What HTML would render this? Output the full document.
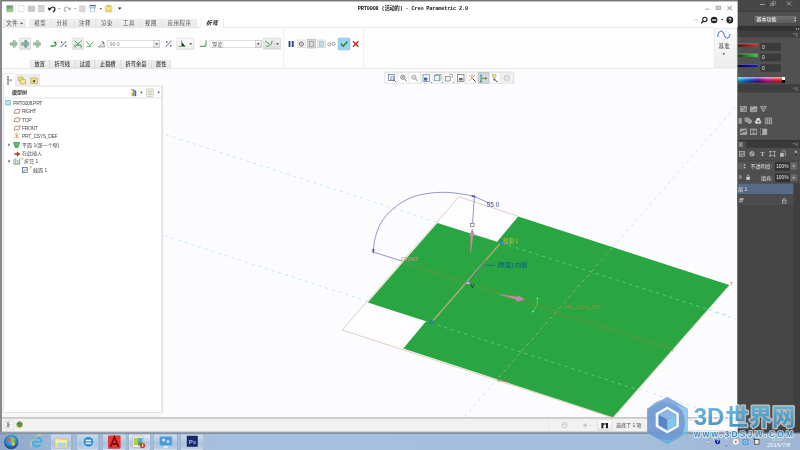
<!DOCTYPE html>
<html lang="zh"><head><meta charset="utf-8"><title>PRT0008 - Creo Parametric 2.0</title>
<style>
html,body{margin:0;padding:0;width:800px;height:450px;overflow:hidden;background:#fcfcfe}
#root{position:absolute;left:0;top:0;width:1920px;height:1080px;transform:scale(0.4166667);transform-origin:0 0;overflow:hidden;
 font-family:"Liberation Sans","Noto Sans CJK SC",sans-serif;font-size:12px;color:#333;background:#fcfcfe;filter:blur(0.7px)}
#root div,#root span.t,#root span.w{position:absolute;box-sizing:border-box}
#root span.t{white-space:nowrap;transform:translateY(-50%);line-height:1}
#root span.w{white-space:nowrap;transform:translateY(-50%);line-height:1;color:#e6e6e6}
#root svg{position:absolute;left:0;top:0;overflow:visible}
</style></head><body>
<div id="root">
<div style="left:1770.24px;top:0px;width:149.76px;height:1039.2px;background:#494949"></div>
<div style="left:1770.24px;top:0px;width:149.76px;height:26.4px;background:#474747"></div>
<div style="left:1770.24px;top:26.4px;width:149.76px;height:1.44px;background:#2e2e2e"></div>
<div style="left:1770.24px;top:27.84px;width:149.76px;height:34.56px;background:#4f4f4f"></div>
<div style="left:1770.24px;top:62.4px;width:149.76px;height:12px;background:#333"></div>
<div style="left:1770.24px;top:74.4px;width:149.76px;height:15.84px;background:#3f3f3f"></div>
<div style="left:1770.24px;top:90.24px;width:149.76px;height:112.8px;background:#515151"></div>
<div style="left:1770.24px;top:203.04px;width:149.76px;height:1.92px;background:#333"></div>
<div style="left:1770.24px;top:204.96px;width:149.76px;height:17.28px;background:#3f3f3f"></div>
<div style="left:1770.24px;top:222.24px;width:149.76px;height:113.76px;background:#515151"></div>
<div style="left:1770.24px;top:336px;width:149.76px;height:2.4px;background:#2e2e2e"></div>
<div style="left:1770.24px;top:338.4px;width:149.76px;height:16.32px;background:#3a3a3a"></div>
<div style="left:1770.24px;top:354.72px;width:149.76px;height:139.68px;background:#4e4e4e"></div>
<div style="left:1770.24px;top:494.4px;width:149.76px;height:544.8px;background:#464646"></div>
<div style="left:1904.16px;top:439.2px;width:15.84px;height:600px;background:#3f3f3f"></div>
<div style="left:0px;top:0px;width:1770.24px;height:4.08px;background:#777"></div>
<div style="left:0px;top:0px;width:4.8px;height:1036.8px;background:#8a8a8a"></div>
<div style="left:4.8px;top:4.08px;width:1765.44px;height:61.44px;background:#fff"></div>
<div style="left:4.8px;top:65.52px;width:1707.84px;height:99.12px;background:#fdfdfd;border-top:1px solid #c9c9c9;border-bottom:1px solid #c9c9c9"></div>
<div style="left:4.8px;top:990.72px;width:386.4px;height:11.52px;background:#f8f8f8"></div>
<div style="left:4.8px;top:1001.76px;width:1765.44px;height:36px;background:#f1f1f1;border-top:2px solid #9a9a9a"></div>
<svg width="1920" height="1080" viewBox="0 0 800 450">
<g fill="none" stroke-linecap="butt">
<!-- datum dashed lines -->
<path d="M166 134.8 L738 319.6" stroke="#98dfd8" stroke-width="0.6" stroke-dasharray="3.2 3.83"/>
<path d="M164.5 235.7 L738 421" stroke="#98dfd8" stroke-width="0.6" stroke-dasharray="3.2 3.83"/>
<path d="M735 107.5 L461 420.5" stroke="#98dfd8" stroke-width="0.6" stroke-dasharray="3.2 3.83"/>
</g>
<!-- unbent outline -->
<polygon points="459,196.8 518.6,216.4 518.2,217.6 729,285.8 613,417.8 342.1,330" fill="#fdfdff" stroke="#c9a98a" stroke-width="0.55"/>
<!-- sheet -->
<polygon points="437.4,222.9 497.1,241.7 518.2,216.4 729.2,285.1 612.9,417.2 403.3,348.4 426,321.3 367.8,302.4" fill="#29a641"/>
<g fill="none">
<path d="M497.1 241.7 L729 316" stroke="#7fd9b8" stroke-width="0.6" stroke-dasharray="3.2 3.83" stroke-dashoffset="2"/>
<path d="M426 321.3 L640 390.5" stroke="#7fd9b8" stroke-width="0.6" stroke-dasharray="3.2 3.83" stroke-dashoffset="2"/>
<path d="M612 248 L496.4 380.2" stroke="#7a8f48" stroke-width="0.5"/><path d="M612 248 L496.4 380.2" stroke="#9fd39a" stroke-width="0.55" stroke-dasharray="3.2 3.83"/>
<!-- csys lines -->
<path d="M402 261 L672 348" stroke="#7a8f42" stroke-width="0.45"/>
<path d="M402 263.5 L672 350.5" stroke="#7a8f42" stroke-width="0.45"/>
<!-- bend line -->
<path d="M500.5 243 L431 323" stroke="#b9a878" stroke-width="1.3"/>
<path d="M486 260 L469 281" stroke="#4a5fa8" stroke-width="0.7"/>
<path d="M485.5 265.3 L495 265.3" stroke="#0b4f8c" stroke-width="0.6"/>
<!-- dimension arc -->
<path d="M373.3 251.6 C373.6 249.4 373.8 243.2 375.1 238.3 C376.4 233.4 378.2 227.3 381.3 222.3 C384.4 217.3 388.8 212.2 393.8 208.1 C398.9 203.9 405.4 199.9 411.6 197.4 C417.8 194.9 424.9 193.8 431.1 193 C437.3 192.2 443.0 192.2 448.9 192.5 C454.8 192.8 462.4 194.1 466.7 194.8 C471.0 195.5 473.2 196.3 474.5 196.6 L489 203" stroke="#3b3fa6" stroke-width="0.55"/>
<path d="M371.5 251.5 L402 261" stroke="#3b3fa6" stroke-width="0.55"/>
<path d="M474.5 194.5 L472.6 223" stroke="#3b3fa6" stroke-width="0.55"/>
<rect x="470.6" y="223.2" width="3.4" height="3.4" fill="#fff" stroke="#333" stroke-width="0.5"/>
</g>
<path d="M472.2 229 L474.6 235.6 L473 235.4 L470.6 252.6 L470.8 235.4 L469.6 235.6 Z" fill="#c98aa8" stroke="#c98aa8" stroke-width="0.5"/>
<path d="M500.4 294.6 L517.6 297.2 L517.6 295.4 L524.6 299.6 L516.4 301.2 L517 299.4 Z" fill="#c98aa8" stroke="#c98aa8" stroke-width="0.5"/>
<path d="M373.3 254 L372.3 249 L374.6 249 Z" fill="#3b3fa6"/>
<path d="M477 197.6 L471.5 196.8 L472 195 Z" fill="#3b3fa6"/>
<ellipse cx="502" cy="242.6" rx="2.6" ry="1.3" fill="#2ba6c8" stroke="#0b3f7c" stroke-width="0.5"/>
<ellipse cx="432" cy="322.2" rx="2.2" ry="1.2" fill="#2ba6c8" stroke="#0b3f7c" stroke-width="0.5"/>
<ellipse cx="468" cy="283" rx="2.2" ry="1.4" fill="#cfd6e6" stroke="#3b3f86" stroke-width="0.5"/>
<path d="M537.5 298.5 L537 305 L533 311.5" fill="none" stroke="#55e06a" stroke-width="0.6"/>
<circle cx="537.5" cy="298.5" r="0.9" fill="#4dff5a"/><circle cx="533" cy="311.5" r="1" fill="#3fffb0"/>
<g font-family="Liberation Sans, Noto Sans CJK SC, sans-serif">
<text x="486.8" y="207.4" font-size="6.4" fill="#3b3fa6">95.0</text>
<text x="503" y="243.4" font-size="5.4" fill="#d8b23a">截面 1</text>
<text x="497.4" y="267.4" font-size="6.2" fill="#0b4f9c">[厚度] 内侧</text>
<text x="470.6" y="287.8" font-size="6" font-weight="bold" fill="#0b3f7c">V</text>
<text x="401" y="260.6" font-size="5" fill="#c9a58a">FRONT</text>
<text x="564.6" y="309.4" font-size="4.7" fill="#7f9a3e">PRT_CSYS_DEF</text>
<text x="730" y="286" font-size="4.6" fill="#a88a6a">T</text><text x="671.6" y="352" font-size="4.2" fill="#8a8a4a">T</text><text x="497.6" y="381.8" font-size="4.4" fill="#8f7a48">RIGHT</text>
</g>
</svg>
<div style="left:8.4px;top:206.4px;width:381.6px;height:783.84px;background:#fff;border:1px solid #c4c4c4;border-right:2px solid #c4c4c4"></div>
<div style="left:14.88px;top:12px;width:17.28px;height:16.8px;background:linear-gradient(160deg,#4a7fa8,#6fae6a 40%,#a4d08a 75%,#7ab06a);border-radius:2px;border:1px solid #7a9a8a"></div>
<div style="left:36.48px;top:8.4px;width:0.96px;height:24px;background:#d8d8d8"></div>
<div style="left:45.12px;top:11.52px;width:12.48px;height:17.28px;background:#fff;border:1px solid #b8b8b8"></div>
<div style="left:67.2px;top:14.4px;width:16.8px;height:13.92px;background:#c9c9c9;border-radius:2px;border:1px solid #b0b0b0"></div>
<div style="left:91.68px;top:12px;width:13.92px;height:16.8px;background:#d5d5d5;border:1px solid #b5b5b5"></div>
<svg width="1920" height="1080" viewBox="0 0 800 450">
<path d="M50 9.2 C51 6.4 54.8 6.2 54.9 9 C55 10.4 54.2 11.4 52.8 11.8" fill="none" stroke="#222" stroke-width="1.2"/><path d="M47.8 7.4 L51.6 8.4 L49 11z" fill="#222"/>
<path d="M69.2 9.2 C68.2 6.4 64.4 6.2 64.3 9 C64.2 10.4 65 11.4 66.4 11.8" fill="none" stroke="#b0b0b0" stroke-width="1.1"/><path d="M71.4 7.4 L67.6 8.4 L70.2 11z" fill="#b0b0b0"/>
<path d="M58 8 h2.4 l-1.2 1.5z M73.8 8 h2.4 l-1.2 1.5z" fill="#999"/>
<path d="M99.6 8 h2.4 l-1.2 1.5z" fill="#444"/>
<path d="M118 7.6 h3.4 l-1.7 2.2z" fill="#222"/>
</svg>
<div style="left:189.6px;top:12.96px;width:15.36px;height:15.84px;background:#d9d9d9;border-radius:2px;border:1px solid #c4c4c4"></div>
<div style="left:214.56px;top:12px;width:15.84px;height:8.16px;background:#fff;border:1px solid #3a6ea8;border-top:3px solid #3a6ea8"></div>
<div style="left:217.44px;top:18.24px;width:10.56px;height:10.56px;background:#fff;border:1px solid #5a82b0;border-top:2px solid #5a82b0"></div>
<div style="left:252.48px;top:14.4px;width:16.32px;height:14.4px;background:linear-gradient(#fdf3a0,#e9cf4a);border:1px solid #b89a2a;border-radius:1px"></div>
<div style="left:256.8px;top:11.52px;width:8.16px;height:5.28px;background:#f3e27a;border:1px solid #b89a2a"></div>
<div style="left:274.56px;top:8.4px;width:0.96px;height:24px;background:#d8d8d8"></div>
<span class="t" style="left:858.72px;top:22.08px;font-family:'Liberation Mono','Noto Sans CJK SC',monospace;font-weight:bold;font-size:12.6px;letter-spacing:-0.44px;color:#111">PRT0008 (活动的) - Creo Parametric 2.0</span>
<div style="left:1692.24px;top:20.64px;width:10.32px;height:2.4px;background:#9a9a9a"></div>
<div style="left:1718.4px;top:14.4px;width:12px;height:10.08px;background:#d4d4d4;border:2px solid #a4a4a4"></div>
<svg width="1920" height="1080" viewBox="0 0 800 450">
<path d="M727.4 6.2 l4.4 4 M731.8 6.2 l-4.4 4" stroke="#a0a0a0" stroke-width="1.1"/><path d="M693 21 L695.6 18.8 L698.2 21" fill="none" stroke="#d0d0d0" stroke-width="0.9"/>
<circle cx="704.8" cy="19.4" r="2.2" fill="#fff" stroke="#222" stroke-width="1.1"/>
<path d="M703.2 21.2 L701.2 23.2" stroke="#222" stroke-width="1.3"/>
<circle cx="714.1" cy="20" r="3.3" fill="#222"/><rect x="712.1" y="19.4" width="4" height="1.3" fill="#fff"/>
<path d="M720.9 19 h2.4 l-1.2 1.5z" fill="#333"/>
<circle cx="729.8" cy="20" r="3.4" fill="#222"/>
<text x="729.8" y="21.9" font-size="5.4" font-weight="bold" text-anchor="middle" fill="#fff" font-family="Liberation Sans, sans-serif">?</text>
</svg>
<div style="left:8.16px;top:45.6px;width:54.24px;height:19.92px;background:linear-gradient(#f1f1f1,#e8e8e8);border:1px solid #d6d6d6;border-bottom:none;text-align:center;font-size:13px;line-height:19px;color:#505050;letter-spacing:1.4px"><span style="margin-right:12px">文件</span></div>
<div style="left:70.56px;top:45.6px;width:51.84px;height:19.92px;background:linear-gradient(#f1f1f1,#e8e8e8);border:1px solid #d6d6d6;border-bottom:none;text-align:center;font-size:13px;line-height:19px;color:#505050;letter-spacing:1.4px">模型</div>
<div style="left:122.4px;top:45.6px;width:55.2px;height:19.92px;background:linear-gradient(#f1f1f1,#e8e8e8);border:1px solid #d6d6d6;border-bottom:none;text-align:center;font-size:13px;line-height:19px;color:#505050;letter-spacing:1.4px">分析</div>
<div style="left:177.6px;top:45.6px;width:52.8px;height:19.92px;background:linear-gradient(#f1f1f1,#e8e8e8);border:1px solid #d6d6d6;border-bottom:none;text-align:center;font-size:13px;line-height:19px;color:#505050;letter-spacing:1.4px">注释</div>
<div style="left:230.4px;top:45.6px;width:52.8px;height:19.92px;background:linear-gradient(#f1f1f1,#e8e8e8);border:1px solid #d6d6d6;border-bottom:none;text-align:center;font-size:13px;line-height:19px;color:#505050;letter-spacing:1.4px">渲染</div>
<div style="left:283.2px;top:45.6px;width:52.8px;height:19.92px;background:linear-gradient(#f1f1f1,#e8e8e8);border:1px solid #d6d6d6;border-bottom:none;text-align:center;font-size:13px;line-height:19px;color:#505050;letter-spacing:1.4px">工具</div>
<div style="left:336px;top:45.6px;width:52.8px;height:19.92px;background:linear-gradient(#f1f1f1,#e8e8e8);border:1px solid #d6d6d6;border-bottom:none;text-align:center;font-size:13px;line-height:19px;color:#505050;letter-spacing:1.4px">视图</div>
<div style="left:388.8px;top:45.6px;width:84px;height:19.92px;background:linear-gradient(#f1f1f1,#e8e8e8);border:1px solid #d6d6d6;border-bottom:none;text-align:center;font-size:13px;line-height:19px;color:#505050;letter-spacing:1.4px">应用程序</div>
<div style="left:481.44px;top:42.24px;width:55.2px;height:24.48px;background:#fdfdfd;border:1px solid #c4c4c4;border-bottom:none;border-radius:3px 3px 0 0;text-align:center;font-size:14px;line-height:23px;color:#222;font-weight:bold;font-style:italic;letter-spacing:0.5px">折弯</div>
<svg width="1920" height="1080" viewBox="0 0 800 450"><path d="M20.2 22.8 h2.8 l-1.4 1.8z" fill="#333"/></svg>
<div style="left:46.8px;top:91.2px;width:27.6px;height:27.84px;background:linear-gradient(#f0f1f2,#e0e2e4);border:1px solid #b0b4b8;border-radius:2px"></div>
<div style="left:174px;top:91.2px;width:26.64px;height:27.84px;background:linear-gradient(#f0f1f2,#e0e2e4);border:1px solid #b0b4b8;border-radius:2px"></div>
<div style="left:423.6px;top:91.2px;width:42px;height:27.84px;background:linear-gradient(#fbfbfb,#ececec);border:1px solid #bdbdbd;border-radius:2px"></div>
<div style="left:631.2px;top:91.2px;width:43.2px;height:27.84px;background:linear-gradient(#f1f1f1,#dcdcdc);border:1px solid #b5b5b5;border-radius:2px"></div>
<div style="left:258px;top:96.96px;width:126px;height:17.28px;background:#fff;border:1px solid #b9b9b9;font-size:11px;line-height:18px;padding-left:5px;color:#777;letter-spacing:0.6px">90.0</div>
<div style="left:368.4px;top:96.96px;width:15.6px;height:17.28px;background:linear-gradient(#f8f8f8,#dedede);border:1px solid #b0b0b0"></div>
<svg width="1920" height="1080" viewBox="0 0 800 450"><path d="M155.4 43.3 h2.6 l-1.3 1.7z" fill="#333"/></svg>
<div style="left:502.8px;top:96.96px;width:125.04px;height:17.28px;background:#fff;border:1px solid #b9b9b9;font-size:11px;line-height:18px;padding-left:5px;color:#777;letter-spacing:0.6px"><span style="border:1px dotted #888;padding:0 1px;color:#555">厚度</span></div>
<div style="left:612.24px;top:96.96px;width:15.6px;height:17.28px;background:linear-gradient(#f8f8f8,#dedede);border:1px solid #b0b0b0"></div>
<svg width="1920" height="1080" viewBox="0 0 800 450"><path d="M257.0 43.3 h2.6 l-1.3 1.7z" fill="#333"/></svg>
<svg width="1920" height="1080" viewBox="0 0 800 450">
<g fill="none">
<!-- icon1-3 bend icons -->
<g id="b1"><path d="M10 42.6 h3 v-2 h2.4 v2 h1.8 v2.6 h-1.8 v2 h-2.4 v-2 h-3z" fill="#a8c9a0" stroke="#7a9a8a" stroke-width="0.4"/><path d="M12 44 h4" stroke="#4a7ab0" stroke-width="0.6" stroke-dasharray="1 0.6"/></g>
<g transform="translate(11.6 0)"><path d="M10 42.6 h3 v-2 h2.4 v2 h1.8 v2.6 h-1.8 v2 h-2.4 v-2 h-3z" fill="#8fb5a0" stroke="#5a8a7a" stroke-width="0.4"/><path d="M14.2 40 v8" stroke="#3a6ab0" stroke-width="0.6" stroke-dasharray="1 0.6"/></g>
<g transform="translate(23.4 0)"><path d="M10 42.6 h3 v-2 h2.4 v2 h1.8 v2.6 h-1.8 v2 h-2.4 v-2 h-3z" fill="#a8c9a0" stroke="#7a9a8a" stroke-width="0.4"/><path d="M12 44 h4" stroke="#4a7ab0" stroke-width="0.6" stroke-dasharray="1 0.6"/></g>
<!-- green curved arrow -->
<path d="M50.6 46 h3.4 c2 0 2.6 -1.6 1.4 -3" stroke="#3aa04a" stroke-width="1.3"/><path d="M53.4 41.4 l3.2 0.4 l-1.6 2.6z" fill="#3aa04a"/>
<!-- percent -->
<path d="M60.6 47 L66.4 41" stroke="#1a3a7a" stroke-width="0.8"/><circle cx="61.6" cy="42.2" r="0.8" fill="#222"/><path d="M64.6 45.4 h2.2 l-1.1 1.6z" fill="#222"/>
<!-- selected green icon -->
<path d="M74.6 40.6 L78 44 L81.6 40.6 M75 47.6 v-2.4 h6.2 v2.4 M78 44 v1.4" stroke="#2f9a45" stroke-width="0.9"/>
<path d="M86.4 41 L90 45.6 M93.4 41.6 L89 46.4 M86.6 46.6 h4.6" stroke="#4aaa5a" stroke-width="0.9"/>
<!-- angle -->
<path d="M98.4 47 L104.6 47 L103.4 42.2 Z" stroke="#555" stroke-width="0.5" fill="#e8e8e8"/><path d="M102 41.2 l2.4 2.4" stroke="#222" stroke-width="0.8"/>
<!-- percent 2 -->
<path d="M165.8 46.6 L171.6 40.8" stroke="#1a3a7a" stroke-width="0.8"/><circle cx="166.8" cy="42" r="0.8" fill="#222"/><circle cx="170.8" cy="45.8" r="0.8" fill="#222"/>
<!-- button with icon -->
<path d="M178.6 46.4 h7 M181.6 40.6 v5.6" stroke="#3a9a4a" stroke-width="0.8"/><path d="M182 42.4 l3 3.6 h-3z" fill="#222"/>
<path d="M189.4 43.2 h2.6 l-1.3 1.7z" fill="#333"/>
<!-- green L -->
<path d="M199.6 46.4 h4.4 c1.4 0 2 -0.8 2 -2 v-4" stroke="#5aaa6a" stroke-width="1.2"/>
<!-- button 2 -->
<path d="M265 41 l4.4 3 M272 40.6 c0 3.6 -1.6 5.6 -6 5.6" stroke="#2f9a45" stroke-width="0.9"/>
<path d="M274 38.4 v10.8" stroke="#c4c4c4" stroke-width="0.4"/>
<path d="M276.2 43.2 h2.6 l-1.3 1.7z" fill="#333"/>
</g>
<path d="M283.6 29 v39 M363.6 29 v39" stroke="#e2e2e2" stroke-width="0.5"/>
<!-- pause -->
<rect x="288.6" y="41" width="1.8" height="6" fill="#1f3a9a"/><rect x="291.8" y="41" width="1.8" height="6" fill="#1f3a9a"/>
<rect x="297.6" y="40" width="7.6" height="7.8" fill="#f4f4f4" stroke="#b9b9b9" stroke-width="0.4"/>
<circle cx="301.4" cy="44" r="2.1" fill="none" stroke="#444" stroke-width="0.7"/><path d="M300 42.6 l2.8 2.8" stroke="#444" stroke-width="0.6"/>
<rect x="307.4" y="39.6" width="8" height="8.4" fill="#d9d9d9" stroke="#9a9a9a" stroke-width="0.5"/>
<rect x="309.4" y="41.4" width="4" height="5" fill="none" stroke="#777" stroke-width="0.5"/>
<rect x="317.6" y="40" width="7.6" height="7.8" fill="#eef4f6" stroke="#a9b9c2" stroke-width="0.4"/>
<rect x="319.4" y="41.6" width="4" height="4.6" fill="#bfe0e8" stroke="#6a9aa8" stroke-width="0.4"/>
<circle cx="329.4" cy="44.4" r="1.6" fill="none" stroke="#666" stroke-width="0.6"/><circle cx="333.6" cy="43.8" r="1.6" fill="none" stroke="#666" stroke-width="0.6"/>
<!-- ok -->
<rect x="338" y="38" width="12" height="12" rx="1.2" fill="#9dd2ef" stroke="#7ab8dc" stroke-width="0.4"/>
<path d="M340.8 43.8 L343.2 46.2 L347.4 41.6" fill="none" stroke="#1f8a3a" stroke-width="1.5"/>
<path d="M353 41.2 L358.4 46.8 M358.4 41.2 L353 46.8" stroke="#c8281e" stroke-width="1.4"/>
</svg>
<div style="left:72px;top:145.44px;width:46.8px;height:19.2px;background:linear-gradient(#f1f1f1,#e4e4e4);border:1px solid #cdcdcd;border-bottom:none;text-align:center;font-size:12.5px;line-height:18px;color:#333;font-weight:500">放置</div>
<div style="left:118.8px;top:145.44px;width:61.2px;height:19.2px;background:linear-gradient(#f1f1f1,#e4e4e4);border:1px solid #cdcdcd;border-bottom:none;text-align:center;font-size:12.5px;line-height:18px;color:#333;font-weight:500">折弯线</div>
<div style="left:180px;top:145.44px;width:48px;height:19.2px;background:linear-gradient(#f1f1f1,#e4e4e4);border:1px solid #cdcdcd;border-bottom:none;text-align:center;font-size:12.5px;line-height:18px;color:#333;font-weight:500">过渡</div>
<div style="left:228px;top:145.44px;width:61.2px;height:19.2px;background:linear-gradient(#f1f1f1,#e4e4e4);border:1px solid #cdcdcd;border-bottom:none;text-align:center;font-size:12.5px;line-height:18px;color:#333;font-weight:500">止裂槽</div>
<div style="left:289.2px;top:145.44px;width:74.4px;height:19.2px;background:linear-gradient(#f1f1f1,#e4e4e4);border:1px solid #cdcdcd;border-bottom:none;text-align:center;font-size:12.5px;line-height:18px;color:#333;font-weight:500">折弯余量</div>
<div style="left:363.6px;top:145.44px;width:46.8px;height:19.2px;background:linear-gradient(#f1f1f1,#e4e4e4);border:1px solid #cdcdcd;border-bottom:none;text-align:center;font-size:12.5px;line-height:18px;color:#333;font-weight:500">属性</div>
<div style="left:1713.6px;top:67.68px;width:55.2px;height:96px;background:linear-gradient(#fbfbfb,#ededed);border:1px solid #d0d0d0;border-radius:2px"></div>
<svg width="1920" height="1080" viewBox="0 0 800 450">
<g fill="#9fb8d8"><circle cx="719" cy="31" r="0.35"/><circle cx="721" cy="31" r="0.35"/><circle cx="723" cy="31" r="0.35"/><circle cx="725" cy="31" r="0.35"/><circle cx="727" cy="31" r="0.35"/><circle cx="729" cy="31" r="0.35"/>
<circle cx="719" cy="33" r="0.35"/><circle cx="729" cy="33" r="0.35"/><circle cx="719" cy="35" r="0.35"/><circle cx="729" cy="35" r="0.35"/><circle cx="719" cy="37" r="0.35"/><circle cx="721" cy="37" r="0.35"/><circle cx="723" cy="37" r="0.35"/><circle cx="729" cy="37" r="0.35"/>
<circle cx="719" cy="39" r="0.35"/><circle cx="721" cy="39" r="0.35"/><circle cx="723" cy="39" r="0.35"/><circle cx="725" cy="39" r="0.35"/><circle cx="727" cy="39" r="0.35"/><circle cx="729" cy="39" r="0.35"/><circle cx="719" cy="41" r="0.35"/><circle cx="721" cy="41" r="0.35"/><circle cx="723" cy="41" r="0.35"/><circle cx="725" cy="41" r="0.35"/><circle cx="727" cy="41" r="0.35"/></g>
<path d="M717.8 37 C718 29.6 723 29.6 724 34.4 C725 39.4 729.6 39.4 730 34" fill="none" stroke="#2a5aa0" stroke-width="0.9"/>
<path d="M722.4 53.2 h2.6 l-1.3 1.8z" fill="#444"/>
</svg>
<span class="t" style="left:1724.64px;top:110.4px;font-size:13px;color:#333;letter-spacing:0.5px">基准</span>
<div style="left:8.4px;top:176.16px;width:28.56px;height:32.64px;background:#fff;border:1px solid #c4c4c4;border-bottom:none;border-radius:3px 3px 0 0"></div>
<div style="left:36.96px;top:177.6px;width:29.28px;height:29.28px;background:#ececec;border:1px solid #cfcfcf;border-bottom:none;border-radius:3px 3px 0 0"></div>
<div style="left:66.24px;top:177.6px;width:29.76px;height:29.28px;background:#ececec;border:1px solid #cfcfcf;border-bottom:none;border-radius:3px 3px 0 0"></div>
<div style="left:9.6px;top:234.24px;width:379.2px;height:1.44px;background:#dcdcdc"></div>
<svg width="1920" height="1080" viewBox="0 0 800 450">
<!-- tab icons -->
<path d="M8 76.6 v8 M8 80.4 h2" stroke="#555" stroke-width="0.6" fill="none"/>
<rect x="7.2" y="76.2" width="1.6" height="1.6" fill="#fff" stroke="#555" stroke-width="0.4"/><rect x="7.2" y="79.6" width="1.6" height="1.6" fill="#fff" stroke="#555" stroke-width="0.4"/><rect x="7.2" y="83" width="1.6" height="1.6" fill="#fff" stroke="#555" stroke-width="0.4"/>
<circle cx="11" cy="80.4" r="1" fill="#fff" stroke="#555" stroke-width="0.4"/>
<rect x="18.6" y="77" width="4.6" height="4" rx="0.8" fill="#f1e27a" stroke="#9a8a2a" stroke-width="0.5"/>
<rect x="20.6" y="79.6" width="5" height="4.4" rx="0.8" fill="#f6ea8a" stroke="#9a8a2a" stroke-width="0.5"/>
<rect x="30.8" y="78" width="6.6" height="5.6" rx="0.6" fill="#f3e680" stroke="#9a8a2a" stroke-width="0.5"/>
<path d="M34.1 79.6 l0.5 1 l1.1 0.1 l-0.8 0.8 l0.2 1.1 l-1 -0.5 l-1 0.5 l0.2 -1.1 l-0.8 -0.8 l1.1 -0.1z" fill="#333"/>
<!-- header icons -->
<path d="M131 89.6 l4.4 1.4 M133.4 89 v7" stroke="#7a8a9a" stroke-width="1"/><rect x="134.4" y="90.4" width="1.8" height="5.8" fill="#3a6ab8"/><rect x="131.6" y="92.6" width="1.4" height="3.6" fill="#e8a03a"/>
<path d="M140.2 91.8 h2.4 l-1.2 1.6z M157.4 91.8 h2.4 l-1.2 1.6z" fill="#333"/>
<rect x="146.6" y="89" width="6.6" height="7.4" rx="0.6" fill="#fbfbf4" stroke="#9a9a8a" stroke-width="0.5"/>
<path d="M148 91 h4 M148 92.8 h4 M148 94.6 h4" stroke="#8a8a7a" stroke-width="0.5"/>
<!-- tree icons -->
<rect x="5.8" y="100.6" width="4.4" height="4.4" fill="#bfeaf4" stroke="#3aa0c4" stroke-width="0.6"/>
<g fill="#fff" stroke="#8a4a2a" stroke-width="0.6">
<path d="M15.4 109.6 h5 l-1.4 3.6 h-5z"/><path d="M15.4 118 h5 l-1.4 3.6 h-5z"/><path d="M15.4 126.2 h5 l-1.4 3.6 h-5z"/>
</g>
<path d="M14 133.4 l5.6 5 M19.6 133.4 l-5.6 5 M16.8 132.6 v6.6" stroke="#b06a3a" stroke-width="0.5"/>
<path d="M8 143.2 l2.4 1.6 l-2.4 1.6z" fill="#888"/>
<path d="M13.6 142.4 h6 l-1.6 5 h-2.8z" fill="#5ac06a" stroke="#2a7a3a" stroke-width="0.6"/>
<path d="M14.4 153.4 h2.6 v-1.6 l3 2.2 l-3 2.2 v-1.6 h-2.6z" fill="#d8281e" stroke="#8a1a12" stroke-width="0.3"/>
<path d="M7.6 160.4 h3 l-1.5 2z" fill="#555"/>
<path d="M14 164 v-5 M15.8 164 v-6 M17.8 164 v-4 M19.6 164 v-5.4 M13.6 164.2 h6.6" stroke="#4a8a5a" stroke-width="0.7"/>
<rect x="21.4" y="158" width="1.8" height="1.8" fill="#f4ec8a" stroke="#b8a83a" stroke-width="0.3"/>
<rect x="22.4" y="167.6" width="4.8" height="5" fill="#e8eef4" stroke="#3a4a6a" stroke-width="0.6"/>
<path d="M23.4 171.8 l3 -3" stroke="#3a4a6a" stroke-width="0.5"/>
<rect x="30" y="166.4" width="1.8" height="1.8" fill="#f4ec8a" stroke="#b8a83a" stroke-width="0.3"/>
</svg>
<span class="t" style="left:28.8px;top:222.24px;font-size:12px;font-weight:bold;color:#333">模型树</span>
<span class="t" style="left:31.68px;top:247.2px;font-size:12px;color:#4a4a4a;letter-spacing:-0.75px;">PRT0008.PRT</span>
<span class="t" style="left:52.8px;top:267.36px;font-size:12px;color:#4a4a4a;letter-spacing:-0.75px;">RIGHT</span>
<span class="t" style="left:52.8px;top:287.52px;font-size:12px;color:#4a4a4a;letter-spacing:-0.75px;">TOP</span>
<span class="t" style="left:52.8px;top:307.2px;font-size:12px;color:#4a4a4a;letter-spacing:-0.75px;">FRONT</span>
<span class="t" style="left:52.8px;top:327.36px;font-size:12px;color:#4a4a4a;letter-spacing:-0.75px;">PRT_CSYS_DEF</span>
<span class="t" style="left:52.8px;top:347.52px;font-size:12px;color:#4a4a4a;">平面 1(第一个壁)</span>
<span class="t" style="left:52.8px;top:367.68px;font-size:12px;color:#4a4a4a;">在此插入</span>
<span class="t" style="left:57.6px;top:387.84px;font-size:12px;color:#4a4a4a;">折弯 1</span>
<span class="t" style="left:79.2px;top:408px;font-size:12px;color:#4a4a4a;">截面 1</span>
<div style="left:922.56px;top:172.32px;width:311.04px;height:28.32px;background:#e3e3e3;border:1px solid #d0d0d0;border-radius:2px"></div>
<div style="left:924.24px;top:173.52px;width:28.56px;height:26.16px;background:#fdfdfd;border:1px solid #e8e8e8;border-radius:2px"></div>
<div style="left:954.24px;top:173.52px;width:26.4px;height:26.16px;background:#fdfdfd;border:1px solid #e8e8e8;border-radius:2px"></div>
<div style="left:982.08px;top:173.52px;width:26.64px;height:26.16px;background:#fdfdfd;border:1px solid #e8e8e8;border-radius:2px"></div>
<div style="left:1010.16px;top:173.52px;width:26.4px;height:26.16px;background:#fdfdfd;border:1px solid #e8e8e8;border-radius:2px"></div>
<div style="left:1038px;top:173.52px;width:25.44px;height:26.16px;background:#fdfdfd;border:1px solid #e8e8e8;border-radius:2px"></div>
<div style="left:1064.88px;top:173.52px;width:26.16px;height:26.16px;background:#fdfdfd;border:1px solid #e8e8e8;border-radius:2px"></div>
<div style="left:1092.48px;top:173.52px;width:25.44px;height:26.16px;background:#fdfdfd;border:1px solid #e8e8e8;border-radius:2px"></div>
<div style="left:1119.36px;top:173.52px;width:27.12px;height:26.16px;background:#fdfdfd;border:1px solid #e8e8e8;border-radius:2px"></div>
<div style="left:1147.92px;top:173.52px;width:25.92px;height:26.16px;background:#d3d7db;border:1px solid #9aa4ae;border-radius:2px"></div>
<div style="left:1175.28px;top:173.52px;width:25.92px;height:26.16px;background:#fdfdfd;border:1px solid #e8e8e8;border-radius:2px"></div>
<div style="left:1202.64px;top:173.52px;width:29.28px;height:26.16px;background:#f1f1f1;border:1px solid #e8e8e8;border-radius:2px"></div>
<svg width="1920" height="1080" viewBox="0 0 800 450">
<g fill="none" stroke-width="0.6" transform="translate(-1 0)">
<rect x="389.6" y="74.6" width="5.6" height="6" stroke="#3a5a9a" fill="#eef4fb"/><circle cx="393.4" cy="78.4" r="1.8" stroke="#555"/><path d="M394.8 79.8 l2 2" stroke="#555" stroke-width="0.9"/>
<circle cx="403.8" cy="77.2" r="2.2" stroke="#555" fill="#eef4fb"/><path d="M405.4 78.8 l2.4 2.4" stroke="#555" stroke-width="0.9"/><path d="M402.8 77.2 h2 M403.8 76.2 v2" stroke="#333" stroke-width="0.5"/>
<circle cx="414.8" cy="77.2" r="2.2" stroke="#777" fill="#eef4fb"/><path d="M416.4 78.8 l2.4 2.4" stroke="#777" stroke-width="0.9"/><path d="M413.8 77.2 h2" stroke="#555" stroke-width="0.5"/>
<rect x="424" y="74.8" width="6.4" height="6.6" stroke="#3a5a9a" fill="#fff"/><rect x="425" y="77.6" width="3.4" height="3" fill="#3a6ab8" stroke="none"/>
<rect x="435.6" y="75.4" width="5" height="5.4" stroke="#4a7a8a" fill="#e4f4f4"/><path d="M435.6 75.4 l1.4 -1 h5 v5.4 l-1.4 1" stroke="#4a7a8a"/>
<rect x="446.6" y="76.4" width="4.6" height="4.6" stroke="#666" fill="#f4f4f4"/><path d="M450 74.4 h3.4 v3.4" stroke="#666"/>
<rect x="458.4" y="74.6" width="6.6" height="6.8" stroke="#555" fill="#f4f4f4"/><rect x="460" y="78" width="3.6" height="2.4" fill="#666" stroke="none"/>
<path d="M470 75 l6 6 M476 75 l-6 6 M473 74 v3" stroke="#b0703a"/><path d="M474 79 l2.6 2.6" stroke="#222" stroke-width="0.9"/>
<path d="M482 75.4 v6 M482 78.4 h5.6" stroke="#2f8a4a" stroke-width="0.8"/><circle cx="482" cy="75.4" r="0.9" fill="#2fa4c8" stroke="none"/><path d="M486 77.2 l2.4 1.2 l-2.4 1.2z" fill="#c83a2a" stroke="none"/><circle cx="482" cy="81.4" r="0.9" fill="#2f8a4a" stroke="none"/>
<rect x="493.4" y="74.6" width="3.6" height="2.4" fill="#f4ec9a" stroke="#9a8a2a" stroke-width="0.4"/><path d="M495.2 77 v1.4" stroke="#6a9a3a" stroke-width="0.7"/><circle cx="495.4" cy="79.6" r="1.1" fill="#555" stroke="none"/><path d="M496.4 80.4 l2.4 1.6" stroke="#333" stroke-width="0.9"/>
<circle cx="507.8" cy="78" r="3" fill="#dedede" stroke="#c8c8c8"/><rect x="506" y="76.4" width="3.6" height="3.2" fill="#ececec" stroke="#c4c4c4" stroke-width="0.4"/>
</g>
<path d="M430.4 82 h1.6 l-0.8 1z M441.4 82 h1.6 l-0.8 1z M452.6 82 h1.6 l-0.8 1z" fill="#555"/>
</svg>
<div style="left:10.56px;top:1007.52px;width:21.12px;height:23.52px;background:#f8f8f8;border:1px solid #b9c4d4;border-radius:1px"></div>
<div style="left:1555.2px;top:1008.48px;width:211.2px;height:24.96px;background:#fbfbfb;border:1px solid #d0d0d0"></div>
<div style="left:1432.8px;top:1007.04px;width:36.96px;height:26.4px;background:linear-gradient(#fff,#e9e9e9);border:1px solid #c4c4c4;border-radius:2px"></div>
<div style="left:1316.64px;top:1005.6px;width:0.96px;height:30.24px;background:#dadada"></div>
<svg width="1920" height="1080" viewBox="0 0 800 450">
<path d="M8 421.6 v6.4 M8 424.8 h2.6 M6.4 421.6 l3.2 6 M9.6 421.6 l-3.2 6" stroke="#555" stroke-width="0.5" fill="none"/>
<circle cx="19.6" cy="424.6" r="3" fill="#4a9a5a" stroke="#d8b83a" stroke-width="0.9"/><path d="M17.4 424 q2.2 -2 4.4 0" stroke="#2a6ab0" stroke-width="0.8" fill="none"/>
<circle cx="564.6" cy="425" r="2.6" fill="#f1f1f1" stroke="#b0b0b0" stroke-width="0.6"/><path d="M562.6 425 q2 -1.6 4 0" stroke="#b0b0b0" stroke-width="0.5" fill="none"/>
<circle cx="585" cy="425.4" r="1.8" fill="#c9c9c9"/><circle cx="590.4" cy="425.4" r="1" fill="#dedede"/><circle cx="593.4" cy="425.4" r="0.8" fill="#e4e4e4"/>
<path d="M602.4 423 v5.2 M607 423 v5.2" stroke="#222" stroke-width="2"/><path d="M602 424 h5.6" stroke="#222" stroke-width="1.2"/>
<path d="M733 424 l1.6 2 l1.6 -2z" fill="#555"/>
</svg>
<span class="t" style="left:1478.4px;top:1020.48px;font-size:12px;color:#444">选择了 1 项</span>
<div style="left:1815.84px;top:0px;width:100.8px;height:17.28px;background:#484848;border:1px solid #3a3a3a;border-top:none;border-radius:0 0 3px 3px"></div>
<div style="left:1841.28px;top:0px;width:0.96px;height:17.28px;background:#3a3a3a"></div>
<div style="left:1868.16px;top:0px;width:0.96px;height:17.28px;background:#3a3a3a"></div>
<div style="left:1824px;top:10.08px;width:10.56px;height:2.4px;background:#b4b4b4"></div>
<svg width="1920" height="1080" viewBox="0 0 800 450">
<rect x="770.8" y="3.4" width="2.8" height="2.4" fill="none" stroke="#a8a8a8" stroke-width="0.6"/><rect x="772.4" y="1.8" width="2.8" height="2.4" fill="none" stroke="#a8a8a8" stroke-width="0.6"/>
<path d="M787 1.6 l4 4 M791 1.6 l-4 4" stroke="#b4b4b4" stroke-width="0.8"/>
<path d="M797 28 l-1.6 0.9 l1.6 0.9z M798 28 l1.6 0.9 l-1.6 0.9z" fill="#d0d0d0"/>
<path d="M793 33.6 h1.6 l-0.8 1z M793 87.8 h1.6 l-0.8 1z M793 143.2 h1.6 l-0.8 1z" fill="#d8d8d8"/>
<path d="M795.2 33.6 h2.8 M795.2 34.8 h2.8 M795.2 36 h2.8 M795.2 87.8 h2.8 M795.2 89 h2.8 M795.2 90.2 h2.8 M795.2 143.2 h2.8 M795.2 144.4 h2.8 M795.2 145.6 h2.8" stroke="#8a8a8a" stroke-width="0.6"/>
</svg>
<div style="left:1808.64px;top:36px;width:103.2px;height:20.64px;background:linear-gradient(#727272,#5c5c5c);border:1px solid #3e3e3e;border-radius:2px"></div>
<span class="t" style="left:1815.36px;top:46.56px;font-size:12px;color:#e8e8e8;font-weight:500">基本功能</span>
<div style="left:1771.2px;top:104.64px;width:48px;height:7.2px;background:linear-gradient(90deg,#5a0a0a,#e02a2a);border-top:1px solid #e8a0a0"></div>
<div style="left:1771.2px;top:129.12px;width:48px;height:7.68px;background:linear-gradient(90deg,#0a4a0a,#3ad04a);border-top:1px solid #a0e8a0"></div>
<div style="left:1771.2px;top:153.6px;width:48px;height:7.68px;background:linear-gradient(90deg,#000040,#1a1ad0);border-top:1px solid #8a8ae8"></div>
<div style="left:1824.96px;top:103.2px;width:49.44px;height:18.72px;background:#3a3a3a;border:1px solid #424242"></div>
<span class="t" style="left:1828.8px;top:112.8px;font-size:12px;color:#e8e8e8">0</span>
<div style="left:1824.96px;top:128.64px;width:49.44px;height:18.72px;background:#3a3a3a;border:1px solid #424242"></div>
<span class="t" style="left:1828.8px;top:138.24px;font-size:12px;color:#e8e8e8">0</span>
<div style="left:1824.96px;top:153.6px;width:49.44px;height:18.72px;background:#3a3a3a;border:1px solid #424242"></div>
<span class="t" style="left:1828.8px;top:163.2px;font-size:12px;color:#e8e8e8">0</span>
<div style="left:1771.2px;top:184.8px;width:112.8px;height:14.4px;background:linear-gradient(rgba(255,255,255,.75),rgba(255,255,255,0) 45%,rgba(0,0,0,.55)),linear-gradient(90deg,#18b8e8,#1a5ad0 25%,#5a1ab0 42%,#d01a9a 60%,#e8284a 80%,#e82a1a)"></div>
<div style="left:1876.8px;top:184.8px;width:7.2px;height:7.2px;background:#fff"></div>
<div style="left:1876.8px;top:192px;width:7.2px;height:7.2px;background:#000"></div>
<svg width="1920" height="1080" viewBox="0 0 800 450">
<g fill="none" stroke="#b8b8b8" stroke-width="0.6">
<rect x="740.4" y="106.4" width="6" height="5.2" fill="#7a7a7a"/><path d="M741 111 l5 -4.4 M741 108 l2 2" stroke="#ddd"/>
<rect x="750.4" y="106.8" width="6.4" height="5" fill="#8a8a8a"/><path d="M750.6 109.4 c2 0 3 -2 6 -2" stroke="#eee"/>
<path d="M760.4 106.4 h6 l-3 5.6z" fill="#7a7a7a"/>
<rect x="738.6" y="118" width="3.2" height="5.8" fill="#a0a0a0" stroke="none"/>
<rect x="745" y="118" width="4" height="3.6" fill="#8a8a8a"/><circle cx="749.6" cy="121.4" r="2" fill="#9a9a9a"/>
<circle cx="758.2" cy="119.6" r="1.9" fill="#ddd" stroke="none"/><circle cx="756.8" cy="122" r="1.9" fill="#ccc" stroke="none"/><circle cx="759.6" cy="122" r="1.9" fill="#bbb" stroke="none"/><circle cx="758.2" cy="121.2" r="0.8" fill="#333" stroke="none"/>
<rect x="765.2" y="118" width="6.6" height="5.8" fill="#5a5a5a"/><path d="M767.4 118 v5.8 M769.6 118 v5.8 M765.2 120 h6.6 M765.2 122 h6.6"/>
<rect x="740.4" y="129" width="6.4" height="5.6" fill="#9a9a9a"/><path d="M740.6 133 c2 -2 4 -1 6 -3" stroke="#222" stroke-width="0.9"/>
<rect x="750.4" y="129" width="6.4" height="5.6" fill="#8a8a8a"/><path d="M751 129.6 l2.6 2.2 l-2.6 2.2z M756.2 129.6 l-2.6 2.2 l2.6 2.2z" fill="#555" stroke="none"/>
<rect x="760.4" y="129" width="6.4" height="5.6" fill="#aaa"/><rect x="760.6" y="129.2" width="1.6" height="5.2" fill="#333" stroke="none"/>
</g>
<!-- layers panel icons row -->
<g fill="none" stroke="#c4c4c4" stroke-width="0.6">
<rect x="739.4" y="151.4" width="5" height="4.8" fill="#6a6a6a"/><path d="M740 155.4 l1.6 -1.6 l1 1 l1.6 -2" />
<circle cx="752" cy="153.8" r="2.3" fill="#9a9a9a"/><path d="M750.4 155.4 l3.2 -3.2" stroke="#444"/>
<rect x="770.2" y="151.8" width="4.4" height="4" /><rect x="769.4" y="151" width="1.2" height="1.2" fill="#ccc" stroke="none"/><rect x="774.2" y="151" width="1.2" height="1.2" fill="#ccc" stroke="none"/><rect x="769.4" y="155.4" width="1.2" height="1.2" fill="#ccc" stroke="none"/><rect x="774.2" y="155.4" width="1.2" height="1.2" fill="#ccc" stroke="none"/>
<rect x="780.4" y="153.4" width="3" height="3" fill="#bbb"/><path d="M782 153.4 v-1.4 a1.6 1.6 0 0 1 3.2 0 v4.4" />
<rect x="794.2" y="150.4" width="3.2" height="6.6" rx="1" fill="#3a3a3a" stroke="#6a6a6a"/><rect x="794.6" y="150.8" width="2.4" height="2.4" fill="#9a9a9a" stroke="none"/>
<!-- lock row -->
<path d="M738.6 176.2 h2.4 M738.6 178 h2.4 M740 175 l1.6 2 l-1.6 2" stroke="#c4c4c4"/>
<rect x="746.4" y="177" width="3.4" height="2.8" fill="#d4d4d4" stroke="none"/><path d="M747 177 v-1 a1.1 1.1 0 0 1 2.2 0 v1" stroke="#d4d4d4"/>
<rect x="782.6" y="199.8" width="3.2" height="2.6" stroke="#c4c4c4"/><path d="M783.2 199.8 v-0.8 a1 1 0 0 1 2 0 v0.8" stroke="#c4c4c4"/>
</g>
<text x="762.6" y="156.2" font-family="Liberation Serif, serif" font-weight="bold" font-size="6" text-anchor="middle" fill="#c8c8c8">T</text>
</svg>
<div style="left:1770.24px;top:384.48px;width:149.76px;height:0.96px;background:#3e3e3e"></div>
<div style="left:1771.2px;top:339.36px;width:20.16px;height:15.36px;background:#4e4e4e"></div>
<span class="t" style="left:1772.64px;top:347.04px;font-size:11px;color:#bdbdbd">图</span>
<div style="left:1771.2px;top:389.28px;width:21.12px;height:19.2px;background:#5e5e5e;border:1px solid #3e3e3e;border-left:none;border-radius:0 2px 2px 0"></div>
<span class="t" style="left:1801.44px;top:399.36px;font-size:12px;color:#e6e6e6;letter-spacing:0.2px">不透明度:</span>
<div style="left:1860px;top:388.8px;width:35.04px;height:20.64px;background:#333;border:1px solid #2e2e2e"></div>
<span class="t" style="left:1862.88px;top:399.36px;font-size:11.5px;color:#e8e8e8">100%</span>
<div style="left:1896px;top:389.28px;width:17.76px;height:19.68px;background:#6a6a6a;border:1px solid #3e3e3e;border-radius:1px"></div>
<span class="t" style="left:1826.4px;top:427.2px;font-size:12px;color:#e6e6e6">填充:</span>
<div style="left:1860px;top:416.64px;width:35.04px;height:20.16px;background:#333;border:1px solid #2e2e2e"></div>
<span class="t" style="left:1862.88px;top:427.2px;font-size:11.5px;color:#e8e8e8">100%</span>
<div style="left:1896px;top:417.12px;width:17.76px;height:19.2px;background:#6a6a6a;border:1px solid #3e3e3e;border-radius:1px"></div>
<div style="left:1770.24px;top:440.64px;width:133.92px;height:25.92px;background:#576a86"></div>
<span class="t" style="left:1771.68px;top:454.56px;font-size:12px;color:#f0f0f0">层 1</span>
<div style="left:1770.24px;top:466.56px;width:133.92px;height:27.84px;background:#4c4c4c;border-top:1px solid #3a3a3a;border-bottom:1px solid #3a3a3a"></div>
<span class="t" style="left:1771.68px;top:480.96px;font-size:12px;color:#e4e4e4;font-style:italic">景</span>
<svg width="1920" height="1080" viewBox="0 0 800 450">
<path d="M743.6 165.6 l1 -1.5 l1 1.5z M743.6 167 l1 1.5 l1 -1.5z" fill="#d0d0d0"/>
<path d="M792.6 165.6 h2.2 l-1.1 1.5z M792.6 177.2 h2.2 l-1.1 1.5z" fill="#e4e4e4"/>
<path d="M794.2 18.8 l1.1 -1.5 l1.1 1.5z M794.2 20.2 l1.1 1.5 l1.1 -1.5z" fill="#ececec"/>
<rect x="782.6" y="200.2" width="3.4" height="2.8" fill="none" stroke="#d0d0d0" stroke-width="0.6"/><path d="M783.3 200.2 v-0.9 a1 1 0 0 1 2 0 v0.9" fill="none" stroke="#d0d0d0" stroke-width="0.6"/>
</svg>
<div style="left:0px;top:1035.84px;width:1770.24px;height:2.4px;background:#9a9a9a"></div>
<div style="left:0px;top:1037.76px;width:1920px;height:42.24px;background:linear-gradient(90deg,#8ca4c5,#9fb8d6 7%,#a6bfdc 28%,#a5bedb 80%,#9fb6d2);border-top:3px solid #64768c"></div>
<div style="left:121.44px;top:1040.64px;width:50.4px;height:39.36px;background:linear-gradient(#cddbec,#b6cae2 45%,#abc1dc 50%,#bccfe6);border:1px solid #7f93b0;border-bottom:none;border-radius:3px;box-shadow:inset 0 0 0 1px rgba(255,255,255,.55)"></div>
<div style="left:183.84px;top:1040.64px;width:52.32px;height:39.36px;background:linear-gradient(#cddbec,#b6cae2 45%,#abc1dc 50%,#bccfe6);border:1px solid #7f93b0;border-bottom:none;border-radius:3px;box-shadow:inset 0 0 0 1px rgba(255,255,255,.55)"></div>
<div style="left:245.28px;top:1040.64px;width:57.6px;height:39.36px;background:linear-gradient(#cddbec,#b6cae2 45%,#abc1dc 50%,#bccfe6);border:1px solid #7f93b0;border-bottom:none;border-radius:3px;box-shadow:inset 0 0 0 1px rgba(255,255,255,.55)"></div>
<div style="left:307.68px;top:1040.64px;width:53.28px;height:39.36px;background:linear-gradient(#e9eff7,#c3d2e6 45%,#b4c6de 50%,#c9d8ea);border:1px solid #7f93b0;border-bottom:none;border-radius:3px;box-shadow:inset 0 0 0 1px rgba(255,255,255,.55)"></div>
<div style="left:367.68px;top:1040.64px;width:59.04px;height:39.36px;background:linear-gradient(#cddbec,#b6cae2 45%,#abc1dc 50%,#bccfe6);border:1px solid #7f93b0;border-bottom:none;border-radius:3px;box-shadow:inset 0 0 0 1px rgba(255,255,255,.55)"></div>
<div style="left:432px;top:1040.64px;width:57.6px;height:39.36px;background:linear-gradient(#cddbec,#b6cae2 45%,#abc1dc 50%,#bccfe6);border:1px solid #7f93b0;border-bottom:none;border-radius:3px;box-shadow:inset 0 0 0 1px rgba(255,255,255,.55)"></div>
<div style="left:174.24px;top:1041.6px;width:1.92px;height:38.4px;background:#b9c8dc;border-left:1px solid #8a9cb6"></div>
<div style="left:238.56px;top:1041.6px;width:1.92px;height:38.4px;background:#b9c8dc;border-left:1px solid #8a9cb6"></div>
<div style="left:362.4px;top:1041.6px;width:1.92px;height:38.4px;background:#b9c8dc;border-left:1px solid #8a9cb6"></div>
<svg width="1920" height="1080" viewBox="0 0 800 450">
<defs>
<radialGradient id="orb" cx="0.5" cy="0.35" r="0.7"><stop offset="0" stop-color="#7fd0f0"/><stop offset="0.55" stop-color="#2a78b8"/><stop offset="1" stop-color="#123a6a"/></radialGradient>
<linearGradient id="wm" x1="0" y1="0" x2="0" y2="1"><stop offset="0" stop-color="#5cb4de"/><stop offset="1" stop-color="#2f82b4"/></linearGradient>
</defs>
<!-- start orb -->
<circle cx="11.2" cy="442" r="7.6" fill="url(#orb)" stroke="#9ac4e4" stroke-width="0.5"/>
<path d="M7.6 438.6 q1.6 -0.9 3.2 -0.3 v3 q-1.6 -0.6 -3.2 0.3z" fill="#e05a2a"/>
<path d="M11.6 438.4 q1.6 0.6 3.2 -0.3 v3 q-1.6 0.9 -3.2 0.3z" fill="#8ac43a"/>
<path d="M7.6 442.4 q1.6 -0.9 3.2 -0.3 v3 q-1.6 -0.6 -3.2 0.3z" fill="#3a9ae0"/>
<path d="M11.6 442.2 q1.6 0.6 3.2 -0.3 v3 q-1.6 0.9 -3.2 0.3z" fill="#f0c83a"/>
<!-- IE -->
<circle cx="36.8" cy="441.8" r="4.6" fill="none" stroke="#3ab4e8" stroke-width="2.2"/>
<rect x="33" y="441" width="8" height="1.7" fill="#3ab4e8"/><rect x="37.6" y="442.6" width="5" height="2" fill="#a0b5d0"/>
<path d="M31 446.6 C30 440 36 435.6 41.6 434.8" fill="none" stroke="#f0d86a" stroke-width="1"/>
<!-- explorer -->
<path d="M55 438 h4 l1 1 h7.6 v9 h-12.6z" fill="#f3e08a" stroke="#c8b05a" stroke-width="0.4"/><rect x="57.6" y="442.6" width="8" height="4.4" fill="#a8d8e8"/><rect x="55.6" y="440.4" width="11.4" height="2" fill="#fbf0b0"/>
<!-- blue circle app -->
<circle cx="88.4" cy="441.8" r="5.6" fill="#3a90d8" stroke="#d8ecf8" stroke-width="0.9"/><rect x="85.6" y="439.8" width="5.6" height="1.5" rx="0.6" fill="#e8f4fc"/><rect x="85.6" y="442.6" width="5.6" height="1.5" rx="0.6" fill="#e8f4fc"/>
<!-- autocad -->
<rect x="108" y="435.4" width="12.6" height="13.4" rx="1" fill="#e03a3a"/><path d="M110.4 447 L114.4 437 L118.6 447 M112 444 h5" fill="none" stroke="#8a0a0a" stroke-width="1.8"/>
<!-- creo -->
<rect x="132.6" y="436" width="11" height="11.6" rx="1" fill="#e8f0e0" stroke="#8ab0a0" stroke-width="0.5"/><rect x="134" y="438" width="4" height="7" fill="#b8c83a"/><rect x="138" y="438" width="4.6" height="4" fill="#5ab0c8"/><rect x="138" y="442" width="4.6" height="3.6" fill="#4a9a5a"/>
<circle cx="142.6" cy="445.6" r="2.6" fill="#d8382a"/><rect x="142" y="444" width="1.2" height="3" fill="#f8d8d0"/>
<!-- rdp -->
<rect x="159.6" y="436.6" width="12.4" height="9" rx="0.8" fill="#4a9ad8" stroke="#8ac0e8" stroke-width="0.5"/><circle cx="163.6" cy="440" r="1.5" fill="#d8ecf8"/><circle cx="168" cy="441.6" r="1.5" fill="#bfe0f4"/><ellipse cx="166" cy="447" rx="2.2" ry="1.3" fill="#e4e8f0"/>
<!-- ps -->
<rect x="187" y="436" width="10.6" height="10.6" fill="#1a2a6a" stroke="#0a1a4a" stroke-width="0.4"/>
<text x="192.3" y="444" font-family="Liberation Sans, sans-serif" font-weight="bold" font-size="6" fill="#9ac0f0" text-anchor="middle">Ps</text>
<!-- tray -->
<rect x="706" y="440.6" width="5" height="3" rx="0.4" fill="#b8c4d4" stroke="#8a98ac" stroke-width="0.4"/>
<circle cx="717.6" cy="441.6" r="2.6" fill="#1a2ab0"/><text x="717.6" y="443.4" font-family="Liberation Sans, sans-serif" font-weight="bold" font-size="4.6" fill="#fff" text-anchor="middle">?</text>
<path d="M725.4 445.4 h2 l-1 1.4z" fill="#5a6a80"/><path d="M725.4 440 l1 -1.4 l1 1.4" fill="none" stroke="#e8eef4" stroke-width="0.5"/>
<circle cx="735.8" cy="441.8" r="2.8" fill="#f8f8f8"/><circle cx="735.8" cy="441.8" r="1" fill="#d83a3a"/>
<rect x="742.6" y="439" width="5.8" height="5.8" rx="0.8" fill="#3a9ae0"/><circle cx="745.5" cy="441.9" r="1.6" fill="none" stroke="#e8f4fc" stroke-width="0.7"/>
<rect x="754.4" y="439.6" width="4.6" height="4.6" fill="#e8e8e8" stroke="#3a3a3a" stroke-width="0.7"/><path d="M753 439 h3" stroke="#333" stroke-width="0.6"/>
<!-- watermark logo -->
<g opacity="0.92">
<path d="M667.3 397.1 L687.6 408.7 L687.6 432.5 L667.3 444.2 L647.1 432.5 L647.1 408.7 Z" fill="#6d99d3"/>
<path d="M667.3 397.1 L687.6 408.7 L687.6 419 C683.5 409.5 676 403.6 666.5 402.4 C661 401.8 656 403 652 405.8 Z" fill="#7ea6dc"/>
<path d="M676.5 404.6 C683 410 686 418 684.6 427 C684 431 682.6 434.4 680.4 436.8 L687.6 432.5 L687.6 408.7 Z" fill="#8ac9ec"/>
<path d="M651 434.8 C658 440 668 441.4 676.6 438 C680 436.6 683 434.4 685 431.6 L687.6 432.5 L667.3 444.2 Z" fill="#66b2e2"/>
<path d="M647.1 412 C650 405 656 401 662 400 L647.1 408.7 Z" fill="#86aee0"/>
<path d="M667.3 408 L677.6 414 L677.6 426 L667.3 432 L657 426 L657 414 Z" fill="#6a9cd8" stroke="#f6f9fd" stroke-width="2.6" stroke-linejoin="miter"/>
<path d="M667.3 410.2 L675.6 415 L667.3 419.8 L659 415 Z" fill="#86b2e4"/>
<path d="M659 415 L667.3 419.8 L667.3 429.8 L659 425 Z" fill="#4a7cc2"/>
<path d="M675.6 415 L667.3 419.8 L667.3 429.8 L675.6 425 Z" fill="#7cc2ea"/>
</g>
<g font-family="Liberation Sans, Noto Sans CJK SC, sans-serif" font-weight="bold" stroke-linejoin="round">
<g opacity="0.62" fill="#fff" stroke="#fff">
<text x="693.8" y="425.4" font-size="24" stroke-width="3" textLength="30.6" lengthAdjust="spacingAndGlyphs">3D</text>
<text x="725.6" y="425" font-size="23" stroke-width="3" textLength="69.6" lengthAdjust="spacingAndGlyphs">世界网</text>
<text x="694" y="437.4" font-size="8.4" stroke-width="2" textLength="99" lengthAdjust="spacing">www.3DSJW.COM</text>
</g>
<g opacity="0.88">
<text x="693.8" y="425.4" font-size="24" fill="url(#wm)" textLength="30.6" lengthAdjust="spacingAndGlyphs">3D</text>
<text x="725.6" y="425" font-size="23" fill="url(#wm)" textLength="69.6" lengthAdjust="spacingAndGlyphs">世界网</text>
<text x="694" y="437.4" font-size="8.4" fill="#2f80b6" textLength="99" lengthAdjust="spacing">www.3DSJW.COM</text>
</g>
</g>
<g font-family="Liberation Sans, sans-serif" fill="#f4f6fa" font-size="5">
<text x="778" y="440.6" text-anchor="middle" opacity="0.6" font-size="6">0:57</text>
<text x="778.6" y="447.4" text-anchor="middle" font-size="6">2016/7/8</text>
</g>
</svg>
</div>
</body></html>
